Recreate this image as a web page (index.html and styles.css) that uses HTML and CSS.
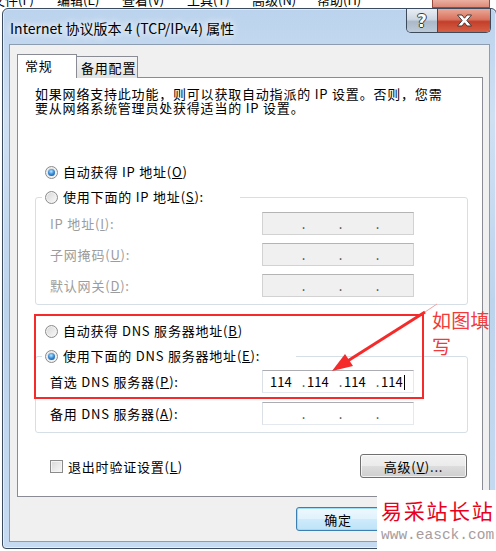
FILE: index.html
```html
<!DOCTYPE html>
<html lang="zh-CN">
<head>
  <meta charset="UTF-8">
  <meta name="viewport" content="width=device-width, initial-scale=1.0">
  <title>Internet 协议版本 4 (TCP/IPv4) 属性</title>
  <link rel="stylesheet" href="styles.css">
</head>
<body>
  <!-- parent window, mostly hidden behind the dialog -->
  <div class="menu-strip">
    <div class="menu-items">
      <span>文件(F)</span><span>编辑(E)</span><span>查看(V)</span><span>工具(T)</span><span>高级(N)</span><span>帮助(H)</span>
    </div>
    <div class="parent-close"></div>
  </div>

  <div class="window">
    <div class="titlebar">
      <div class="title">Internet 协议版本 4 (TCP/IPv4) 属性</div>
      <div class="caption-btns">
        <div class="cap-btn help">?</div>
        <div class="cap-btn close">
          <svg width="17" height="13" viewBox="0 0 17 13">
            <polygon points="1.5,1 6,1 8.5,4.2 11,1 15.5,1 10.9,6.5 15.5,12 11,12 8.5,8.8 6,12 1.5,12 6.1,6.5" fill="#fff" stroke="#3a3a3a" stroke-width="1"/>
          </svg>
        </div>
      </div>
    </div>

    <div class="panel">
      <div class="tabs">
        <div class="tab active">常规</div>
        <div class="tab">备用配置</div>
      </div>

      <div class="tab-pane">
        <p class="desc">如果网络支持此功能，则可以获取自动指派的 IP 设置。否则，您需<br>要从网络系统管理员处获得适当的 IP 设置。</p>

        <div class="option standalone first"><span class="radio checked"></span>自动获得 IP 地址(<u>O</u>)</div>

        <fieldset class="group ip-group">
          <legend class="option"><span class="radio"></span>使用下面的 IP 地址(<u>S</u>):</legend>
          <div class="field disabled">
            <label>IP 地址(<u>I</u>):</label>
            <div class="ip-box"><span></span><i>.</i><span></span><i>.</i><span></span><i>.</i><span></span></div>
          </div>
          <div class="field disabled">
            <label>子网掩码(<u>U</u>):</label>
            <div class="ip-box"><span></span><i>.</i><span></span><i>.</i><span></span><i>.</i><span></span></div>
          </div>
          <div class="field disabled">
            <label>默认网关(<u>D</u>):</label>
            <div class="ip-box"><span></span><i>.</i><span></span><i>.</i><span></span><i>.</i><span></span></div>
          </div>
        </fieldset>

        <div class="option standalone dns-first"><span class="radio"></span>自动获得 DNS 服务器地址(<u>B</u>)</div>

        <fieldset class="group dns-group">
          <legend class="option"><span class="radio checked"></span>使用下面的 DNS 服务器地址(<u>E</u>):</legend>
          <div class="field">
            <label>首选 DNS 服务器(<u>P</u>):</label>
            <div class="ip-box"><span>114</span><i>.</i><span>114</span><i>.</i><span>114</span><i>.</i><span>114<b class="caret"></b></span></div>
          </div>
          <div class="field">
            <label>备用 DNS 服务器(<u>A</u>):</label>
            <div class="ip-box"><span></span><i>.</i><span></span><i>.</i><span></span><i>.</i><span></span></div>
          </div>
        </fieldset>

        <div class="footer-row">
          <div class="check-label"><span class="checkbox"></span>退出时验证设置(<u>L</u>)</div>
          <div class="btn advanced">高级(<u>V</u>)...</div>
        </div>
      </div>

      <div class="dialog-btns">
        <div class="btn default">确定</div>
      </div>
    </div>
  </div>

  <!-- annotation drawn over the screenshot -->
  <div class="mark-box"></div>
  <svg class="arrow" width="496" height="551" viewBox="0 0 496 551">
    <line x1="425" y1="312" x2="437" y2="304" stroke="#f7a0a0" stroke-width="1"/>
    <line x1="425" y1="312" x2="346" y2="362" stroke="#f52a2a" stroke-width="3"/>
    <polygon points="332,371 345,354 353,366" fill="#f52a2a"/>
  </svg>
  <div class="note">如图填<br>写</div>

  <div class="watermark">
    <div class="wm-title">易采站长站</div>
    <div class="wm-url">www.easck.com</div>
  </div>
</body>
</html>
```

FILE: styles.css
```css
html, body {
  margin: 0;
}
body {
  position: relative;
  width: 496px;
  height: 551px;
  overflow: hidden;
  background: #fff;
  font-family: "Noto Sans CJK SC", sans-serif;
  font-size: 13px;
  color: #000;
}

/* parent window strip */
.menu-strip {
  display: flex;
  height: 8px;
  overflow: hidden;
  background: #fff;
}
.menu-items {
  display: flex;
  margin: -7px 0 0 -8px;
  line-height: 13px;
}
.menu-items span {
  flex: none;
  width: 65px;
}
.parent-close {
  margin-left: auto;
  margin-right: 6px;
  width: 58px;
  height: 8px;
  box-sizing: border-box;
  border: 1px solid #9a4a3c;
  border-top: none;
  background: linear-gradient(#eab0a2, #dd8a76);
}

/* dialog frame */
.window {
  box-sizing: border-box;
  width: 495px;
  height: 541px;
  margin-left: 2px;
  border: 1px solid #3b4b5f;
  border-radius: 6px 6px 4px 4px;
  background: linear-gradient(180deg, #bbd3ed 0%, #cfe0f3 20%, #bdd4ed 55%, #c6dbf1 100%);
  box-shadow: inset 0 0 0 1px rgba(255, 255, 255, .55);
  padding: 0 6px 6px;
  display: flex;
  flex-direction: column;
}
.titlebar {
  display: flex;
  flex: none;
  height: 35px;
}
.title {
  padding: 9px 0 0 1px;
  line-height: 20px;
  font-size: 14px;
  text-shadow: 0 0 6px #fff, 0 0 10px #fff;
}
.caption-btns {
  display: flex;
  margin-left: auto;
  margin-right: -1px;
  height: 24px;
  box-sizing: border-box;
  border: 1px solid #3d4a5c;
  border-top: none;
  border-radius: 0 0 5px 5px;
  overflow: hidden;
}
.cap-btn {
  display: flex;
  align-items: center;
  justify-content: center;
}
.help {
  width: 30px;
  border-right: 1px solid #3d4a5c;
  background: linear-gradient(#e9eef4 0%, #cdd7e2 45%, #aab8c9 55%, #bccad9 100%);
  color: #fff;
  font-family: "DejaVu Sans", sans-serif;
  font-weight: bold;
  font-size: 17px;
  text-shadow: 1px 0 #3a3a3a, -1px 0 #3a3a3a, 0 1px #3a3a3a, 0 -1px #3a3a3a;
}
.close {
  width: 52px;
  background: linear-gradient(#eaa898 0%, #d9735f 45%, #c3402b 55%, #d65e44 100%);
}

/* client area */
.panel {
  flex: 1;
  min-height: 0;
  background: #f0f0f0;
  border: 1px solid #8d9cae;
  padding: 9px 6px 0 7px;
  display: flex;
  flex-direction: column;
}
.tabs {
  display: flex;
  align-items: flex-end;
  height: 24px;
  margin-bottom: -1px;
  position: relative;
  z-index: 1;
}
.tab {
  box-sizing: border-box;
  height: 22px;
  width: 62px;
  margin-left: -1px;
  padding-left: 4px;
  border: 1px solid #898c95;
  border-bottom: none;
  background: linear-gradient(#f4f4f4, #e2e2e2);
  line-height: 22px;
  letter-spacing: .8px;
}
.tab.active {
  height: 24px;
  width: 60px;
  margin-left: 0;
  padding-left: 7px;
  background: #fff;
  position: relative;
  z-index: 2;
  line-height: 22px;
}
.tab-pane {
  box-sizing: border-box;
  height: 420px;
  background: #fff;
  border: 1px solid #898c95;
  padding-top: 9px;
  letter-spacing: .8px;
}
.desc {
  margin: 0 0 0 17px;
  line-height: 14px;
  white-space: nowrap;
}

.option {
  display: flex;
  align-items: center;
  height: 18px;
  line-height: 18px;
  white-space: nowrap;
}
.option.standalone {
  margin-left: 27px;
}
.option.first {
  margin-top: 48px;
}
.option.dns-first {
  margin-top: 17px;
}
.radio {
  position: relative;
  flex: none;
  width: 13px;
  height: 13px;
  box-sizing: border-box;
  margin-right: 5px;
  border: 1px solid #8b8b8b;
  border-radius: 50%;
  background: linear-gradient(135deg, #d6d6d6, #fbfbfb);
  box-shadow: inset 0 0 0 1px #f2f2f2;
}
.radio.checked::after {
  content: "";
  position: absolute;
  left: 2px;
  top: 2px;
  width: 7px;
  height: 7px;
  border-radius: 50%;
  background: radial-gradient(circle at 45% 35%, #bfe6ff 0, #3a90dc 45%, #0b3e80 100%);
}
u {
  text-underline-offset: 1px;
}

.group {
  margin: 7px 14px 0 17px;
  padding: 6px 0 7px 14px;
  border: 1px solid #d5dfe5;
  border-radius: 3px;
  min-width: 0;
}
.group legend {
  margin-left: -8px;
  padding: 0 36px 0 3px;
}
.dns-group {
  padding-top: 5px;
}
.field {
  display: flex;
  align-items: center;
  height: 23px;
  margin-bottom: 8px;
  white-space: nowrap;
}
.dns-group .field {
  margin-bottom: 9px;
}
.group .field:last-child {
  margin-bottom: 0;
}
.field label {
  flex: none;
  width: 212px;
}
.field.disabled label {
  color: #9c9c9c;
}
.ip-box {
  display: flex;
  box-sizing: border-box;
  width: 152px;
  height: 23px;
  padding-left: 6px;
  border: 1px solid #e3e9ef;
  border-top-color: #abadb3;
  border-left-color: #dbdfe6;
  background: #fff;
  letter-spacing: 0;
  line-height: 21px;
}
.field.disabled .ip-box {
  border-color: #d2d2d2;
  border-top-color: #b4b4b4;
  background: #f0f0f0;
}
.ip-box span {
  flex: none;
  width: 32px;
  padding-left: 1px;
  box-sizing: border-box;
}
.ip-box i {
  flex: none;
  width: 5px;
  font-style: normal;
  color: #444;
  text-align: center;
}
.caret {
  display: inline-block;
  width: 1px;
  height: 15px;
  margin-left: 1px;
  vertical-align: -3px;
  background: #000;
}

.footer-row {
  display: flex;
  align-items: center;
  margin: 21px 15px 0 32px;
}
.check-label {
  display: flex;
  align-items: center;
  white-space: nowrap;
}
.checkbox {
  flex: none;
  width: 13px;
  height: 13px;
  box-sizing: border-box;
  margin-right: 5px;
  border: 1px solid #8b8b8b;
  background: linear-gradient(135deg, #d8d8d8, #f8f8f8);
  box-shadow: inset 0 0 0 1px #f4f4f4;
}
.btn {
  box-sizing: border-box;
  height: 24px;
  width: 84px;
  display: flex;
  align-items: center;
  justify-content: center;
  border: 1px solid #707070;
  border-radius: 3px;
  background: linear-gradient(#f2f2f2 0%, #ebebeb 49%, #dddddd 50%, #cfcfcf 100%);
  box-shadow: inset 0 0 0 1px rgba(255, 255, 255, .7);
  letter-spacing: .8px;
  white-space: nowrap;
}
.btn.advanced {
  margin-left: auto;
  width: 107px;
}
.btn.default {
  border-color: #3c7fb1;
  background: linear-gradient(#eef8fd 0%, #e0f2fc 49%, #cdebfb 50%, #bfe3f7 100%);
  box-shadow: inset 0 0 0 1px #9fdcf7;
}
.dialog-btns {
  display: flex;
  margin: 10px 0 0 279px;
}

/* annotation overlay */
.mark-box {
  position: absolute;
  left: 34px;
  top: 314px;
  width: 390px;
  height: 85px;
  box-sizing: border-box;
  border: 2px solid #f52a2a;
}
.arrow {
  position: absolute;
  left: 0;
  top: 0;
  pointer-events: none;
}
.note {
  position: absolute;
  left: 432px;
  top: 307px;
  font-size: 19px;
  line-height: 26px;
  color: #f23a3a;
  letter-spacing: .3px;
}
.watermark {
  position: absolute;
  left: 377px;
  top: 490px;
  width: 119px;
  height: 61px;
  background: #fff;
  padding: 7px 0 0 4px;
  box-sizing: border-box;
}
.wm-title {
  font-size: 21px;
  line-height: 26px;
  letter-spacing: 1.7px;
  color: #e8001c;
  white-space: nowrap;
}
.wm-url {
  margin-top: 4px;
  font-family: "Liberation Mono", monospace;
  font-size: 14.5px;
  line-height: 16px;
  color: #a89c9c;
  white-space: nowrap;
}
```
